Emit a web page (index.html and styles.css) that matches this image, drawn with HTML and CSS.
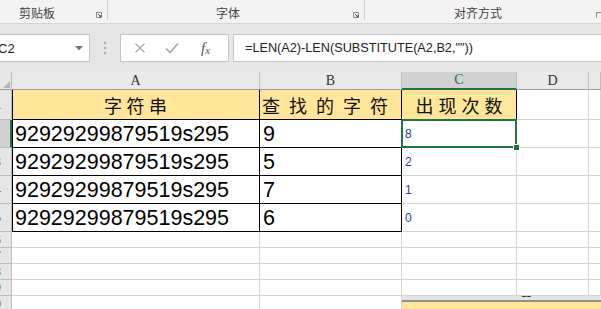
FILE: index.html
```html
<!DOCTYPE html>
<html lang="zh-CN">
<head>
  <meta charset="UTF-8" />
  <meta name="viewport" content="width=device-width, initial-scale=1.0">
  <title>字符出现次数</title>
  <link rel="stylesheet" href="styles.css">
</head>
<body>

  <!-- Ribbon group labels -->
  <div class="ribbon">
    <div class="group g-clip">
      <span class="label">剪贴板</span>
      <svg class="launcher" width="6" height="6" viewBox="0 0 6 6"><path d="M0.5 5.5V0.5H5.5V5.5Z" fill="none" stroke="#8a8a8a"/><path d="M2 2L5 5M3 5H5V3" fill="none" stroke="#555"/></svg>
    </div>
    <div class="group g-font">
      <span class="label">字体</span>
      <svg class="launcher" width="6" height="6" viewBox="0 0 6 6"><path d="M0.5 5.5V0.5H5.5V5.5Z" fill="none" stroke="#8a8a8a"/><path d="M2 2L5 5M3 5H5V3" fill="none" stroke="#555"/></svg>
    </div>
    <div class="group g-align">
      <span class="label">对齐方式</span>
      <svg class="launcher" width="6" height="6" viewBox="0 0 6 6"><path d="M0.5 5.5V0.5H5.5" fill="none" stroke="#8a8a8a"/></svg>
    </div>
  </div>

  <!-- Name box + formula bar -->
  <div class="formula-bar">
    <div class="name-box">
      <span>C2</span>
      <svg width="8" height="5" viewBox="0 0 8 5"><path d="M0 0H8L4 4.5Z" fill="#777"/></svg>
    </div>
    <div class="grip"><i></i><i></i><i></i></div>
    <div class="fn-box">
      <svg width="12" height="12" viewBox="0 0 12 12"><path d="M1.5 1.5L10.5 10.5M10.5 1.5L1.5 10.5" stroke="#a8a8a8" stroke-width="1.3"/></svg>
      <svg width="14" height="12" viewBox="0 0 14 12"><path d="M1 6.5L5 10.5L13 1.5" fill="none" stroke="#a8a8a8" stroke-width="1.6"/></svg>
      <span class="fx">f<sub>x</sub></span>
    </div>
    <div class="formula">=LEN(A2)-LEN(SUBSTITUTE(A2,B2,""))</div>
  </div>

  <!-- Worksheet -->
  <div class="sheet">
    <div class="corner"></div>
    <div class="col">A</div>
    <div class="col">B</div>
    <div class="col col-sel">C</div>
    <div class="col">D</div>
    <div class="col"></div>

    <div class="row"><span>1</span></div>
    <div class="cell head tb ta"><span class="h-a">字符串</span></div>
    <div class="cell head tb"><span class="h-b">查找的字符</span></div>
    <div class="cell head tb"><span class="h-c">出现次数</span></div>
    <div class="cell"></div>
    <div class="cell"></div>

    <div class="row row-sel"><span>2</span></div>
    <div class="cell big tb ta">92929299879519s295</div>
    <div class="cell big tb">9</div>
    <div class="cell num sel">8</div>
    <div class="cell"></div>
    <div class="cell"></div>

    <div class="row"><span>3</span></div>
    <div class="cell big tb ta">92929299879519s295</div>
    <div class="cell big tb">5</div>
    <div class="cell num">2</div>
    <div class="cell"></div>
    <div class="cell"></div>

    <div class="row"><span>4</span></div>
    <div class="cell big tb ta">92929299879519s295</div>
    <div class="cell big tb">7</div>
    <div class="cell num">1</div>
    <div class="cell"></div>
    <div class="cell"></div>

    <div class="row"><span>5</span></div>
    <div class="cell big tb ta">92929299879519s295</div>
    <div class="cell big tb">6</div>
    <div class="cell num">0</div>
    <div class="cell"></div>
    <div class="cell"></div>

    <div class="row"><span>6</span></div>
    <div class="cell"></div><div class="cell"></div><div class="cell"></div><div class="cell"></div><div class="cell"></div>
    <div class="row"><span>7</span></div>
    <div class="cell"></div><div class="cell"></div><div class="cell"></div><div class="cell"></div><div class="cell"></div>
    <div class="row"><span>8</span></div>
    <div class="cell"></div><div class="cell"></div><div class="cell"></div><div class="cell"></div><div class="cell"></div>
    <div class="row"><span>9</span></div>
    <div class="cell"></div><div class="cell"></div><div class="cell"></div><div class="cell"></div><div class="cell"></div>
    <div class="row"><span>10</span></div>
    <div class="cell"></div><div class="cell"></div><div class="cell"></div><div class="cell"></div><div class="cell"></div>

    <!-- second copy of the sheet pasted underneath -->
    <div class="pasted">
      <div class="pasted-head"><span>11</span></div>
      <div class="pasted-body"><span>字符串</span></div>
    </div>
  </div>

</body>
</html>
```

FILE: styles.css
```css
body { margin:0; width:601px; height:309px; overflow:hidden; background:#fff; font-family:"Liberation Sans", Arial, sans-serif; }

/* ribbon */
.ribbon { display:flex; height:23px; background:#f3f3f3; border-bottom:1px solid #d5d5d5; }
.group { position:relative; display:flex; justify-content:center; align-items:flex-start; height:20px; border-right:1px solid #d2d2d2; box-sizing:border-box; }
.g-clip { margin-left:-33px; width:141px; }
.g-font { width:257px; padding-right:16px; }
.g-align { flex:1; border-right:none; padding-right:10px; }
.label { font-family:"Noto Sans CJK SC", sans-serif; font-size:12px; line-height:14px; margin-top:6px; color:#444; }
.launcher { position:absolute; right:5px; top:12px; }
.g-align .launcher { right:-1px; }

/* formula bar */
.formula-bar { display:flex; align-items:center; height:48px; background:#e6e6e6; padding:0; box-sizing:border-box; }
.name-box { display:flex; align-items:center; justify-content:space-between; width:91px; height:28px; margin-left:-1px; background:#fff; border:1px solid #c6c6c6; box-sizing:border-box; padding:0 6px 0 0; font-size:13px; color:#222; }
.name-box span { margin-left:-2px; }
.grip { display:flex; flex-direction:column; gap:3px; margin:0 14px 0 14px; }
.grip i { width:2px; height:2px; background:#a9a9a9; display:block; }
.fn-box { display:flex; align-items:center; width:109px; height:28px; background:#fff; border:1px solid #c6c6c6; box-sizing:border-box; padding:0 0 0 13px; gap:0; }
.fn-box svg:first-child { margin-right:19px; }
.fn-box svg:nth-child(2) { margin-right:22px; }
.fx { font-family:"Liberation Serif", serif; font-style:italic; font-size:15px; color:#555; }
.fx sub { font-size:11px; vertical-align:-1px; }
.formula { flex:1; height:28px; margin-left:4px; background:#fdfdfd; border:1px solid #c6c6c6; border-right:none; box-sizing:border-box; padding-left:11px; font-size:12.7px; line-height:26px; color:#222; white-space:nowrap; }

/* worksheet grid */
.sheet { position:relative; display:grid; grid-template-columns:12px 248px 142px 115px 72px 1fr; grid-template-rows:18px 30px 28px 28px 28px 28px 16px 16px 16px 16px 16px; }
.corner { background:#e6e6e6; border-right:1px solid #bdbdbd; border-bottom:1px solid #9e9e9e; box-sizing:border-box; position:relative; }
.corner::after { content:""; position:absolute; right:1px; bottom:1px; border-left:7px solid transparent; border-bottom:7px solid #b5b5b5; }
.col { background:#e9e9e9; border-right:1px solid #bdbdbd; border-bottom:1px solid #9e9e9e; box-sizing:border-box; display:flex; align-items:center; justify-content:center; font-family:"Liberation Serif", serif; font-size:14px; color:#333; }
.col-sel { background:#d2d2d2; color:#217346; border-bottom:2px solid #217346; }
.row { background:#e6e6e6; border-right:1px solid #bdbdbd; border-bottom:1px solid #bdbdbd; box-sizing:border-box; overflow:hidden; display:flex; justify-content:flex-end; align-items:center; padding-right:10px; font-size:12px; color:#444; }
.row-sel { background:#d2d2d2; color:#217346; border-right:2px solid #217346; }

.cell { border-right:1px solid #d4d4d4; border-bottom:1px solid #d4d4d4; box-sizing:border-box; display:flex; align-items:center; white-space:nowrap; overflow:visible; }
.tb { border-right-color:#000; border-bottom-color:#000; }
.ta { box-shadow:inset 1px 0 0 #000; }
.head { background:#ffe699; justify-content:center; font-family:"Noto Sans CJK SC", sans-serif; font-size:18px; color:#111; }
.h-a { letter-spacing:4.5px; padding-left:4.5px; }
.h-b { letter-spacing:9px; margin-right:auto; padding-left:2px; }
.h-c { letter-spacing:5px; padding-left:5px; }
.big { font-size:21.5px; color:#000; padding-left:3px; padding-top:2px; }
.num { font-size:12px; color:#1d3f95; padding-left:3px; }
.sel { position:relative; }
.sel::after { content:""; position:absolute; left:-1px; top:-1px; right:-1px; bottom:-1px; border:2px solid #217346; }
.sel::before { content:""; position:absolute; right:-4px; bottom:-4px; width:5px; height:5px; background:#217346; border:1px solid #fff; z-index:1; }

/* pasted strip along the bottom */
.pasted { position:absolute; left:402px; top:224px; width:199px; height:13px; overflow:hidden; }
.pasted-head { height:4px; background:#e3e3e3; border-bottom:2px solid #8f8f8f; position:relative; }
.pasted-head span { position:absolute; left:119px; top:-8px; font-size:10px; color:#222; }
.pasted-body { height:8px; background:#ffe699; position:relative; }
.pasted-body span { position:absolute; left:96px; top:5px; font-family:"Noto Sans CJK SC", sans-serif; font-size:19px; letter-spacing:6px; color:#111; }
```
